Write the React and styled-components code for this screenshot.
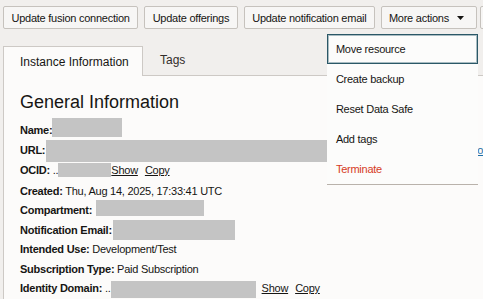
import React from "react"
import styled, { createGlobalStyle } from "styled-components"

const GlobalStyle = createGlobalStyle`
  body {
    margin: 0;
    background: #f1efed;
    font-family: "Liberation Sans", Arial, sans-serif;
    color: #161513;
    overflow: hidden;
  }
`

const Page = styled.div`
  display: flex;
  flex-direction: column;
  height: 100vh;
`

const Toolbar = styled.div`
  display: flex;
  gap: 6px;
  padding: 6px 0 0 3px;
  white-space: nowrap;
`

const Button = styled.button`
  flex-shrink: 0;
  display: inline-flex;
  align-items: center;
  gap: 8px;
  height: 23px;
  box-sizing: border-box;
  padding: ${p => p.$caret ? "0 12px 0 7px" : "0 7.5px"};
  margin-left: ${p => p.$ml || 0}px;
  border: 1px solid #c6c2bd;
  border-radius: 2px;
  background: #f7f6f5;
  font-family: "Liberation Sans", Arial, sans-serif;
  font-size: 11px;
  letter-spacing: -0.25px;
  color: #161513;
`

const MenuAnchor = styled.div`
  position: relative;
  flex-shrink: 0;
`

const Menu = styled.div`
  position: absolute;
  top: calc(100% + 5px);
  right: -1px;
  width: 151px;
  z-index: 10;
  background: #fcfcfb;
  border-bottom: 1px solid #b9b2ab;
`

const MenuItem = styled.div`
  display: flex;
  align-items: center;
  height: 30px;
  box-sizing: border-box;
  padding-left: 9px;
  font-size: 11px;
  letter-spacing: -0.25px;
  color: ${p => p.$danger ? "#d63b25" : "#161513"};
  box-shadow: ${p => p.$focused ? "inset 0 0 0 1px #2b5867, inset 0 0 0 2px #a9bcc2" : "none"};
`

const Tabs = styled.div`
  display: flex;
  margin-top: 17px;
  padding-left: 3px;
  position: relative;
  z-index: 1;
`

const Tab = styled.div`
  display: flex;
  align-items: center;
  flex-shrink: 0;
  white-space: nowrap;
  height: 30px;
  box-sizing: border-box;
  margin-bottom: -1px;
  font-size: 12px;
  color: #161513;
  ${p => p.$active ? `
    width: 140px;
    padding: 0 16px;
    background: #fcfbfa;
    border: 1px solid #cdc9c5;
    border-bottom: none;
  ` : `
    padding: 0 0 3px 17px;
    color: #312d2a;
  `}
`

const Panel = styled.div`
  flex: 1;
  margin-left: 3px;
  background: #fcfbfa;
  border-top: 1px solid #cdc9c5;
  border-left: 1px solid #cdc9c5;
  padding: 14px 0 0 16px;
`

const Heading = styled.h2`
  margin: 0;
  font-size: 18px;
  line-height: 24px;
  font-weight: normal;
`

const Fields = styled.div`
  margin-top: 6px;
`

const Row = styled.div`
  display: flex;
  align-items: flex-start;
  height: ${p => p.$h || 20}px;
  line-height: ${p => p.$h || 20}px;
  margin-top: ${p => p.$mt || 0}px;
  font-size: 11px;
  letter-spacing: -0.25px;
  white-space: nowrap;
`

const Label = styled.b`
  font-weight: bold;
`

const Redact = styled.span`
  flex-shrink: 0;
  display: block;
  background: #c4c4c4;
  width: ${p => p.$w}px;
  height: ${p => p.$h}px;
  margin-top: ${p => p.$top || 0}px;
  margin-left: ${p => p.$ml || 0}px;
`

const LinkText = styled.span`
  text-decoration: underline;
  margin-left: ${p => p.$ml || 0}px;
  color: ${p => p.$blue ? "#1f6fa8" : "#161513"};
`

const Caret = () => (
  <svg width="7" height="4" viewBox="0 0 7 4">
    <path d="M0 0h7L3.5 4z" fill="#161513" />
  </svg>
)

const menuItems = ["Move resource", "Create backup", "Reset Data Safe", "Add tags"]

export default function App() {
  return (
    <Page>
      <GlobalStyle />
      <Toolbar>
        <Button>Update fusion connection</Button>
        <Button>Update offerings</Button>
        <Button>Update notification email</Button>
        <MenuAnchor>
          <Button $caret>More actions <Caret /></Button>
          <Menu>
            {menuItems.map((m, i) => (
              <MenuItem key={m} $focused={i === 0}>{m}</MenuItem>
            ))}
            <MenuItem $danger>Terminate</MenuItem>
          </Menu>
        </MenuAnchor>
        <Button $ml={-3}>Open service console</Button>
      </Toolbar>

      <Tabs>
        <Tab $active>Instance Information</Tab>
        <Tab>Tags</Tab>
      </Tabs>

      <Panel>
        <Heading>General Information</Heading>
        <Fields>
          <Row>
            <span><Label>Name:</Label></span>
            <Redact $w={70} $h={19} $top={-2.5} />
          </Row>
          <Row>
            <span><Label>URL:</Label></span>
            <Redact $w={412} $h={22} $top={-0.5} $ml={1} />
            <LinkText $blue $ml={6}>Show</LinkText>
          </Row>
          <Row>
            <span><Label>OCID:</Label> ..</span>
            <Redact $w={53} $h={14} $top={2.5} />
            <LinkText>Show</LinkText>
            <LinkText $ml={7}>Copy</LinkText>
          </Row>
          <Row $mt={1.5} $h={19.5}>
            <span><Label>Created:</Label> Thu, Aug 14, 2025, 17:33:41 UTC</span>
          </Row>
          <Row $h={19.5}>
            <span><Label>Compartment:</Label></span>
            <Redact $w={108} $h={16} $top={-1.5} $ml={4} />
          </Row>
          <Row $h={19.5}>
            <span><Label>Notification Email:</Label></span>
            <Redact $w={122} $h={20} $top={-1} $ml={1} />
          </Row>
          <Row $h={19.5}>
            <span><Label>Intended Use:</Label> Development/Test</span>
          </Row>
          <Row $h={19.5}>
            <span><Label>Subscription Type:</Label> Paid Subscription</span>
          </Row>
          <Row $h={19.5}>
            <span><Label>Identity Domain:</Label> ..</span>
            <Redact $w={145} $h={17} $top={1.5} />
            <LinkText $ml={6}>Show</LinkText>
            <LinkText $ml={7}>Copy</LinkText>
          </Row>
        </Fields>
      </Panel>
    </Page>
  )
}
